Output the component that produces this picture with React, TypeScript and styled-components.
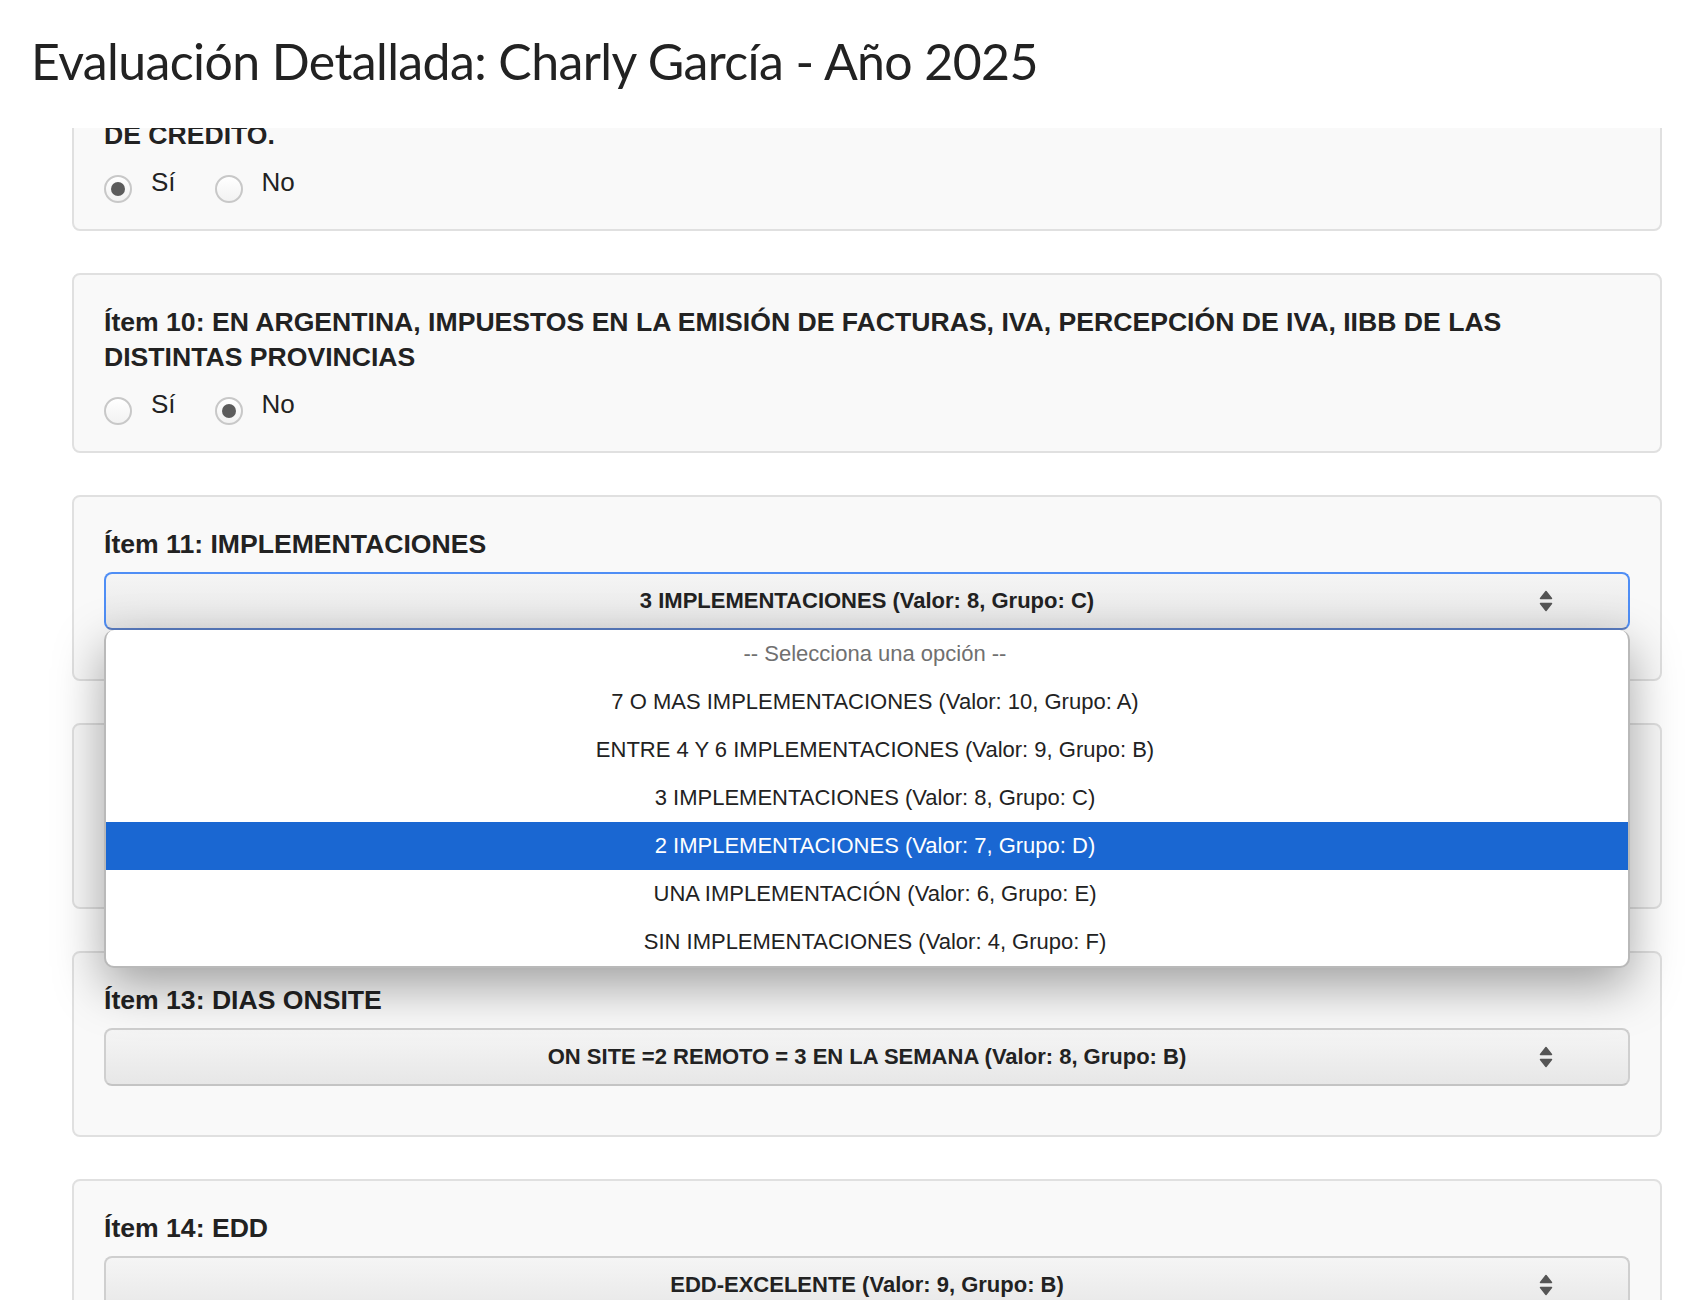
import React, { useLayoutEffect, useRef } from "react";
import styled, { createGlobalStyle } from "styled-components";

const GlobalStyle = createGlobalStyle`
  html, body, #root { height: 100%; }
  body {
    margin: 0;
    background: #ffffff;
    color: #222222;
    font-family: "Liberation Sans", Arial, sans-serif;
  }
  * { box-sizing: border-box; }
`;

const Page = styled.div`
  height: 100vh;
  display: flex;
  flex-direction: column;
  overflow: hidden;
`;

const Header = styled.header`
  flex: none;
  height: 128px;
  padding: 31px 0 0 31px;
  background: #ffffff;
`;

const Title = styled.h1`
  margin: 0;
  font-family: "Lato", "Open Sans", sans-serif;
  font-weight: 400;
  font-size: 50px;
  line-height: 60px;
  color: #222222;
  letter-spacing: -0.6px;
`;

const Scroller = styled.main`
  flex: 1;
  position: relative;
  overflow: hidden;
  padding: 0 36px 0 72px;
`;

const List = styled.div`
  display: flex;
  flex-direction: column;
  gap: 42px;
  padding-bottom: 60px;
`;

const Card = styled.section`
  background: #f9f9f9;
  border: 2px solid #e0e0e0;
  border-radius: 8px;
  padding: 30px 30px 22px;
`;

const Question = styled.h3`
  margin: 0 0 10px;
  max-width: 1460px;
  font-size: 26.6px;
  line-height: 35px;
  font-weight: 700;
  color: #222222;
`;

const RadioRow = styled.div`
  display: flex;
  align-items: center;
  gap: 39px;
  height: 44px;
  padding-bottom: 6px;
`;

const RadioOption = styled.label`
  display: flex;
  align-items: center;
  gap: 19px;
  font-size: 26px;
  line-height: 30px;
  color: #222222;
`;

const RadioCircle = styled.span<{ $checked: boolean }>`
  width: 28px;
  height: 28px;
  margin-top: 13px;
  border-radius: 50%;
  border: 2px solid #c8c8c8;
  background: linear-gradient(#ffffff, #f2f2f2);
  display: flex;
  align-items: center;
  justify-content: center;
  &::after {
    content: "";
    width: 14px;
    height: 14px;
    border-radius: 50%;
    background: #5c5c5c;
    display: ${(p) => (p.$checked ? "block" : "none")};
  }
`;

const SelectWrap = styled.div`
  position: relative;
  margin-bottom: 27px;
`;

const SelectBox = styled.div<{ $focused?: boolean }>`
  height: 58px;
  display: grid;
  grid-template-columns: 1fr auto 1fr;
  align-items: center;
  border: 2px solid ${(p) => (p.$focused ? "#4f8ef5" : "#cfcfcf")};
  border-bottom-color: ${(p) => (p.$focused ? "#5a7dc2" : "#c4c4c4")};
  border-radius: 8px;
  background: linear-gradient(#f5f5f5, #e7e7e7);
  font-size: 22px;
  font-weight: 700;
  color: #222222;
`;

const SelectText = styled.span`
  grid-column: 2;
  white-space: nowrap;
`;

const ArrowSlot = styled.span`
  grid-column: 3;
  justify-self: end;
  margin-right: 75px;
  display: flex;
`;

const Popup = styled.ul`
  position: absolute;
  z-index: 10;
  top: 100%;
  left: 0;
  right: 0;
  margin: 0;
  padding: 0;
  list-style: none;
  background: #ffffff;
  border: 2px solid #b9b9b9;
  border-top-width: 0;
  border-radius: 10px;
  box-shadow: 0 18px 50px rgba(0, 0, 0, 0.36);
  overflow: hidden;
`;

const OptionItem = styled.li<{ $active?: boolean; $placeholder?: boolean }>`
  height: 48px;
  display: flex;
  align-items: center;
  justify-content: center;
  padding-left: 16px;
  font-size: 22px;
  color: ${(p) => (p.$active ? "#ffffff" : p.$placeholder ? "#707070" : "#222222")};
  background: ${(p) => (p.$active ? "#1a67d2" : "transparent")};
`;

const SortArrows = () => (
  <svg width="14" height="22" viewBox="0 0 14 22" aria-hidden="true">
    <path d="M7 1.5 L12.5 8.5 L1.5 8.5 Z" fill="#555" stroke="#555" strokeWidth="1.5" strokeLinejoin="round" />
    <path d="M1.5 13.5 L12.5 13.5 L7 20.5 Z" fill="#555" stroke="#555" strokeWidth="1.5" strokeLinejoin="round" />
  </svg>
);

type Item =
  | { kind: "radio"; label: React.ReactNode; value: "si" | "no" }
  | { kind: "select"; label: string; value: string; open?: boolean; options?: string[]; active?: number };

const implementaciones = [
  "-- Selecciona una opción --",
  "7 O MAS IMPLEMENTACIONES (Valor: 10, Grupo: A)",
  "ENTRE 4 Y 6 IMPLEMENTACIONES (Valor: 9, Grupo: B)",
  "3 IMPLEMENTACIONES (Valor: 8, Grupo: C)",
  "2 IMPLEMENTACIONES (Valor: 7, Grupo: D)",
  "UNA IMPLEMENTACIÓN (Valor: 6, Grupo: E)",
  "SIN IMPLEMENTACIONES (Valor: 4, Grupo: F)",
];

const items: Item[] = [
  {
    kind: "radio",
    label: (
      <>
        Ítem 9: CONOCIMIENTO DE MEDIOS DE PAGO, TRANSFERENCIAS, DÉBITOS Y TARJETAS
        <br />
        DE CREDITO.
      </>
    ),
    value: "si",
  },
  {
    kind: "radio",
    label:
      "Ítem 10: EN ARGENTINA, IMPUESTOS EN LA EMISIÓN DE FACTURAS, IVA, PERCEPCIÓN DE IVA, IIBB DE LAS DISTINTAS PROVINCIAS",
    value: "no",
  },
  {
    kind: "select",
    label: "Ítem 11: IMPLEMENTACIONES",
    value: "3 IMPLEMENTACIONES (Valor: 8, Grupo: C)",
    open: true,
    options: implementaciones,
    active: 4,
  },
  {
    kind: "select",
    label: "Ítem 12: CAPACITACIONES",
    value: "ENTRE 2 Y 3 CAPACITACIONES (Valor: 8, Grupo: B)",
  },
  {
    kind: "select",
    label: "Ítem 13: DIAS ONSITE",
    value: "ON SITE =2 REMOTO = 3 EN LA SEMANA (Valor: 8, Grupo: B)",
  },
  {
    kind: "select",
    label: "Ítem 14: EDD",
    value: "EDD-EXCELENTE (Valor: 9, Grupo: B)",
  },
];

export default function App() {
  const scrollerRef = useRef<HTMLElement>(null);
  const anchorRef = useRef<HTMLElement>(null);

  useLayoutEffect(() => {
    const s = scrollerRef.current;
    const a = anchorRef.current;
    if (s && a) {
      s.scrollTop = a.offsetTop - 145;
    }
  }, []);

  return (
    <>
      <GlobalStyle />
      <Page>
        <Header>
          <Title>Evaluación Detallada: Charly García - Año 2025</Title>
        </Header>
        <Scroller ref={scrollerRef}>
          <List>
            {items.map((it, i) => (
              <Card key={i} ref={i === 1 ? anchorRef : undefined}>
                <Question>{it.label}</Question>
                {it.kind === "radio" ? (
                  <RadioRow>
                    <RadioOption>
                      <RadioCircle $checked={it.value === "si"} />
                      Sí
                    </RadioOption>
                    <RadioOption>
                      <RadioCircle $checked={it.value === "no"} />
                      No
                    </RadioOption>
                  </RadioRow>
                ) : (
                  <SelectWrap>
                    <SelectBox $focused={it.open}>
                      <SelectText>{it.value}</SelectText>
                      <ArrowSlot>
                        <SortArrows />
                      </ArrowSlot>
                    </SelectBox>
                    {it.open && it.options && (
                      <Popup>
                        {it.options.map((o, j) => (
                          <OptionItem key={j} $active={j === it.active} $placeholder={j === 0}>
                            {o}
                          </OptionItem>
                        ))}
                      </Popup>
                    )}
                  </SelectWrap>
                )}
              </Card>
            ))}
          </List>
        </Scroller>
      </Page>
    </>
  );
}
